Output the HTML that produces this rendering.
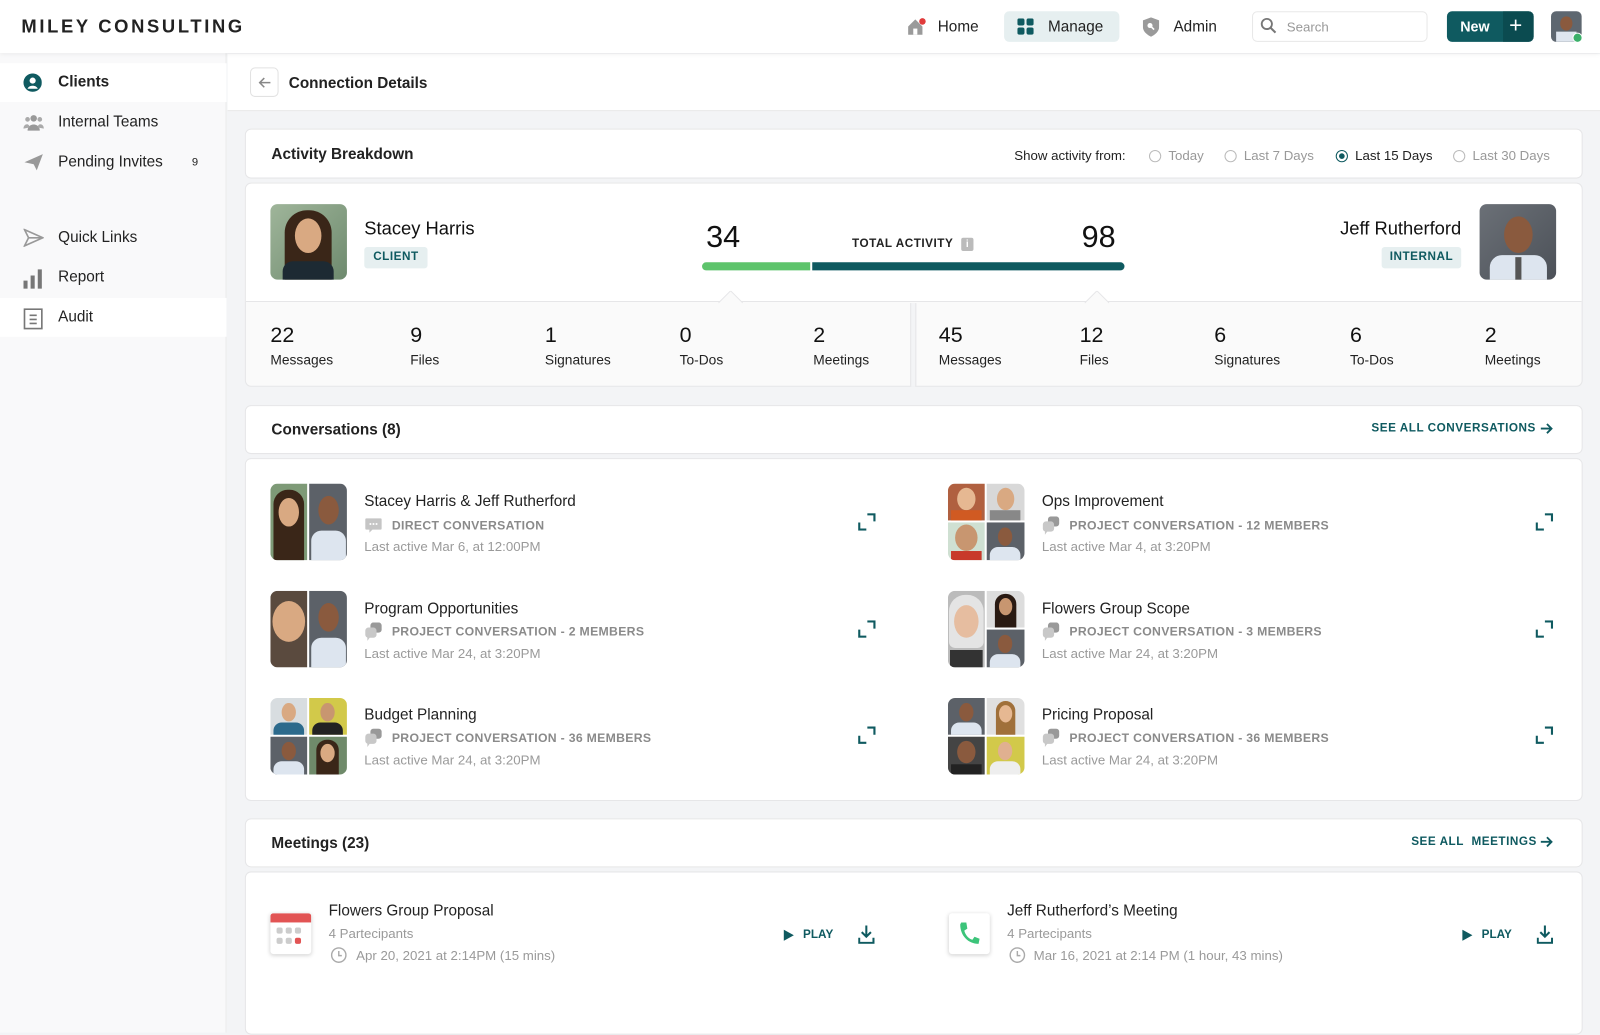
<!DOCTYPE html>
<html><head><meta charset="utf-8">
<style>
*{box-sizing:border-box;margin:0;padding:0}
html,body{width:1600px;height:1000px;overflow:hidden;background:#f3f4f6}
body{font-family:"Liberation Sans",sans-serif;color:#1d1d1f}
#w{position:absolute;left:0;top:0;width:1568px;height:1000px;transform:scale(1.020408);transform-origin:0 0;background:#f3f4f6}
.a{position:absolute}
.hdr{left:0;top:0;width:1568px;height:52px;background:#fff;box-shadow:0 2px 4px rgba(0,0,0,.05);z-index:3}
.logo{left:21px;top:16px;font-size:18px;letter-spacing:2.6px;font-weight:bold;color:#222}
.nav{font-size:15px;color:#222}
.side{left:0;top:52px;width:222px;height:960px;background:#f9f9fa;border-right:1px solid #ececec}
.si{position:absolute;left:0;width:222px;height:38px;font-size:15px;color:#222}
.si span{position:absolute;left:57px;top:10px}
.si svg{position:absolute;left:23px;top:10px}
.card{background:#fff;border:1px solid #e6e6e8;border-radius:6px}
.h15{font-size:15px;font-weight:bold;color:#222}
.ph{border-radius:7px;overflow:hidden}
.face{position:absolute;border-radius:50%}
.num{font-size:21px;color:#111}
.lbl{font-size:13.5px;color:#222}
.ct{font-size:15px;color:#222}
.cs{font-size:12px;font-weight:bold;color:#8a8a8a;letter-spacing:.3px}
.cl{font-size:13px;color:#9a9a9a}
.teal{color:#0f5a60}
</style></head><body><div id="w">

<div class="a hdr">
 <div class="a logo">MILEY CONSULTING</div>
 <svg class="a" style="left:889px;top:17px" width="20" height="18" viewBox="0 0 20 18"><path d="M1 9 L8 2 L15 9 V17 H1Z" fill="#9a9a9a"/><rect x="6" y="11" width="4" height="6" fill="#fff"/><circle cx="15" cy="4" r="3.2" fill="#e03b3b"/></svg>
 <div class="a nav" style="left:919px;top:18px">Home</div>
 <div class="a" style="left:984px;top:11px;width:113px;height:30px;background:#e6eff0;border-radius:5px"></div>
 <svg class="a" style="left:997px;top:18px" width="16" height="16"><rect x="0" y="0" width="7" height="7" rx="2" fill="#0f5a60"/><rect x="9" y="0" width="7" height="7" rx="2" fill="#0f5a60"/><rect x="0" y="9" width="7" height="7" rx="2" fill="#0f5a60"/><rect x="9" y="9" width="7" height="7" rx="2" fill="#0f5a60"/></svg>
 <div class="a nav" style="left:1027px;top:18px">Manage</div>
 <svg class="a" style="left:1120px;top:17px" width="16" height="19" viewBox="0 0 16 19"><path d="M8 0 L16 3 V9 C16 14 12 17 8 19 C4 17 0 14 0 9 V3Z" fill="#9a9a9a"/><circle cx="7" cy="8" r="2.5" fill="#fff"/><path d="M8.5 9.5 L11 12" stroke="#fff" stroke-width="1.6"/></svg>
 <div class="a nav" style="left:1150px;top:18px">Admin</div>
 <div class="a" style="left:1227px;top:11px;width:172px;height:30px;border:1px solid #e8e8e8;border-radius:5px"></div>
 <svg class="a" style="left:1235px;top:17px" width="17" height="17"><circle cx="6.5" cy="6.5" r="5" stroke="#777" stroke-width="1.8" fill="none"/><path d="M10 10 L15 15" stroke="#777" stroke-width="2"/></svg>
 <div class="a" style="left:1261px;top:19px;font-size:13px;color:#999">Search</div>
 <div class="a" style="left:1418px;top:11px;width:85px;height:30px;background:#0f5a60;border-radius:5px;overflow:hidden"><div class="a" style="left:55px;top:0;width:30px;height:30px;background:#0b4b50"></div><div class="a" style="left:13px;top:7px;color:#fff;font-size:14px;font-weight:bold">New</div><div class="a" style="left:61px;top:1px;color:#fff;font-size:22px">+</div></div>
 <div class="a ph" style="left:1520px;top:11px;width:30px;height:30px;background:#5e6770;border-radius:5px"><div class="face" style="left:9px;top:5px;width:12px;height:14px;background:#8a5a3e"></div><div class="a" style="left:5px;top:20px;width:20px;height:10px;background:#dfe6ef"></div></div>
 <div class="a" style="left:1541px;top:32px;width:10px;height:10px;border-radius:50%;background:#3bb06a;border:1.5px solid #fff"></div>
</div>

<div class="a side">
 <div class="si" style="top:10px;background:#fff"><svg width="18" height="18"><circle cx="9" cy="9" r="9" fill="#0f5a60"/><circle cx="9" cy="7" r="3" fill="#fff"/><path d="M4 15 C5 11 13 11 14 15Z" fill="#fff"/></svg><span style="font-weight:bold">Clients</span></div>
 <div class="si" style="top:49px"><svg width="20" height="18"><circle cx="10" cy="5" r="3.2" fill="#999"/><circle cx="4" cy="6" r="2.3" fill="#aaa"/><circle cx="16" cy="6" r="2.3" fill="#aaa"/><path d="M4 17 C4 9 16 9 16 17Z" fill="#999"/><path d="M0 15 C0 10 6 9 6 14Z M20 15 C20 10 14 9 14 14Z" fill="#aaa"/></svg><span>Internal Teams</span></div>
 <div class="si" style="top:88px"><svg width="20" height="18"><path d="M1 9 L19 1 L13 17 L10 11Z" fill="#999"/></svg><span>Pending Invites</span><div class="a" style="left:188px;top:13px;font-size:11px">9</div></div>
 <div class="si" style="top:162px"><svg width="20" height="18"><path d="M1 1 L19 9 L1 17 L5 9Z M5 9 H19" fill="none" stroke="#999" stroke-width="1.6"/></svg><span>Quick Links</span></div>
 <div class="si" style="top:201px"><svg width="20" height="20"><rect x="0" y="12" width="4" height="8" fill="#777"/><rect x="7" y="7" width="4" height="13" fill="#777"/><rect x="14" y="1" width="4" height="19" fill="#777"/></svg><span>Report</span></div>
 <div class="si" style="top:240px;background:#fff"><svg width="20" height="21"><rect x="1" y="1" width="17" height="19" fill="none" stroke="#777" stroke-width="1.6"/><path d="M6 7h7M6 11h7M6 15h7" stroke="#777" stroke-width="1.6"/></svg><span>Audit</span></div>
</div>

<div class="a" style="left:223px;top:53px;width:1345px;height:56px;background:#fff;border-bottom:1px solid #e6e6e6"></div>
<div class="a" style="left:245px;top:66px;width:28px;height:29px;border:1px solid #e2e2e2;border-radius:5px;background:#fff"><svg class="a" style="left:7px;top:8px" width="13" height="12"><path d="M12 6H2M6 1.5L1.5 6L6 10.5" stroke="#888" stroke-width="1.5" fill="none"/></svg></div>
<div class="a" style="left:283px;top:73px;font-size:15px;font-weight:bold;color:#222">Connection Details</div>

<div class="a card" style="left:240px;top:126px;width:1311px;height:49px"></div>
<div class="a h15" style="left:266px;top:143px">Activity Breakdown</div>
<div class="a" style="left:994px;top:145px;font-size:13px;color:#222">Show activity from:</div>
<div class="a" style="left:1126px;top:145px;font-size:13px;color:#999"><span style="display:inline-block;width:12px;height:12px;border:1.5px solid #bbb;border-radius:50%;vertical-align:-2px;margin-right:7px"></span>Today</div>
<div class="a" style="left:1200px;top:145px;font-size:13px;color:#999"><span style="display:inline-block;width:12px;height:12px;border:1.5px solid #bbb;border-radius:50%;vertical-align:-2px;margin-right:7px"></span>Last 7 Days</div>
<div class="a" style="left:1309px;top:145px;font-size:13px;color:#222"><span style="display:inline-block;width:12px;height:12px;border:1.5px solid #0f5a60;border-radius:50%;vertical-align:-2px;margin-right:7px;background:radial-gradient(circle,#0f5a60 2.5px,#fff 3px)"></span>Last 15 Days</div>
<div class="a" style="left:1424px;top:145px;font-size:13px;color:#999"><span style="display:inline-block;width:12px;height:12px;border:1.5px solid #bbb;border-radius:50%;vertical-align:-2px;margin-right:7px"></span>Last 30 Days</div>

<div class="a card" style="left:240px;top:179px;width:1311px;height:200px;background:#fafafa"></div>
<div class="a" style="left:241px;top:180px;width:1309px;height:116px;background:#fff;border-radius:6px 6px 0 0;border-bottom:1px solid #e6e6e8"></div>
<div class="a" style="left:892px;top:297px;width:6px;height:82px;background:#f3f4f6;border-left:1px solid #e6e6e8;border-right:1px solid #e6e6e8"></div>
<svg class="a" style="left:704px;top:285px" width="24" height="13"><path d="M0 12 L12 0 L24 12" fill="#fafafa" stroke="#e6e6e8"/></svg>
<svg class="a" style="left:1063px;top:285px" width="24" height="13"><path d="M0 12 L12 0 L24 12" fill="#fafafa" stroke="#e6e6e8"/></svg>

<div class="a ph" style="left:265px;top:200px;width:75px;height:74px;background:linear-gradient(135deg,#9fb59a,#6e8a6e)"><div class="a" style="left:14px;top:6px;width:46px;height:70px;background:#3a2618;border-radius:22px 22px 0 0"></div><div class="face" style="left:24px;top:14px;width:26px;height:34px;background:#d9a982"></div><div class="a" style="left:12px;top:56px;width:50px;height:20px;background:#1d2a33;border-radius:10px 10px 0 0"></div></div>
<div class="a" style="left:357px;top:214px;font-size:18px;color:#111">Stacey Harris</div>
<div class="a" style="left:357px;top:242px;width:62px;height:21px;background:#e6eff0;border-radius:3px;font-size:11.5px;font-weight:bold;color:#0f5a60;text-align:center;line-height:21px;letter-spacing:.5px">CLIENT</div>
<div class="a" style="left:692px;top:216px;font-size:30px;color:#111">34</div>
<div class="a" style="left:835px;top:233px;font-size:11.5px;font-weight:bold;letter-spacing:.5px;color:#222">TOTAL ACTIVITY</div>
<div class="a" style="left:942px;top:233px;width:12px;height:13px;background:#bbb;border-radius:2px;color:#fff;font-size:10px;text-align:center;line-height:13px;font-weight:bold">i</div>
<div class="a" style="left:1060px;top:216px;font-size:30px;color:#111">98</div>
<div class="a" style="left:688px;top:257px;width:106px;height:8px;background:#5ec46c;border-radius:4px 0 0 4px"></div>
<div class="a" style="left:796px;top:257px;width:306px;height:8px;background:#0f5a60;border-radius:0 4px 4px 0"></div>
<div class="a" style="left:1200px;top:214px;width:232px;text-align:right;font-size:18px;color:#111">Jeff Rutherford</div>
<div class="a" style="left:1354px;top:242px;width:78px;height:21px;background:#e6eff0;border-radius:3px;font-size:11.5px;font-weight:bold;color:#0f5a60;text-align:center;line-height:21px;letter-spacing:.5px">INTERNAL</div>
<div class="a ph" style="left:1450px;top:200px;width:75px;height:74px;background:linear-gradient(135deg,#6b7077,#4c5158)"><div class="face" style="left:24px;top:12px;width:28px;height:36px;background:#8a5a3e"></div><div class="a" style="left:10px;top:50px;width:56px;height:26px;background:#dde5ef;border-radius:12px 12px 0 0"></div><div class="a" style="left:35px;top:52px;width:6px;height:24px;background:#555"></div></div>

<div class="a num" style="left:265px;top:317px">22</div><div class="a lbl" style="left:265px;top:345px">Messages</div>
<div class="a num" style="left:402px;top:317px">9</div><div class="a lbl" style="left:402px;top:345px">Files</div>
<div class="a num" style="left:534px;top:317px">1</div><div class="a lbl" style="left:534px;top:345px">Signatures</div>
<div class="a num" style="left:666px;top:317px">0</div><div class="a lbl" style="left:666px;top:345px">To-Dos</div>
<div class="a num" style="left:797px;top:317px">2</div><div class="a lbl" style="left:797px;top:345px">Meetings</div>
<div class="a num" style="left:920px;top:317px">45</div><div class="a lbl" style="left:920px;top:345px">Messages</div>
<div class="a num" style="left:1058px;top:317px">12</div><div class="a lbl" style="left:1058px;top:345px">Files</div>
<div class="a num" style="left:1190px;top:317px">6</div><div class="a lbl" style="left:1190px;top:345px">Signatures</div>
<div class="a num" style="left:1323px;top:317px">6</div><div class="a lbl" style="left:1323px;top:345px">To-Dos</div>
<div class="a num" style="left:1455px;top:317px">2</div><div class="a lbl" style="left:1455px;top:345px">Meetings</div>

<div class="a card" style="left:240px;top:397px;width:1311px;height:48px"></div>
<div class="a h15" style="left:266px;top:413px">Conversations (8)</div>
<div class="a teal" style="left:1344px;top:414px;font-size:11.5px;font-weight:bold;letter-spacing:.5px">SEE ALL CONVERSATIONS</div>
<svg class="a" style="left:1509px;top:414px" width="13" height="12"><path d="M1 6H11M7 1.5L11.5 6L7 10.5" stroke="#0f5a60" stroke-width="1.8" fill="none"/></svg>
<div class="a card" style="left:240px;top:449px;width:1311px;height:336px"></div>

<div class="a card" style="left:240px;top:802px;width:1311px;height:48px"></div>
<div class="a h15" style="left:266px;top:818px">Meetings (23)</div>
<div class="a teal" style="left:1383px;top:819px;font-size:11.5px;font-weight:bold;letter-spacing:.5px">SEE ALL&nbsp; MEETINGS</div>
<svg class="a" style="left:1509px;top:819px" width="13" height="12"><path d="M1 6H11M7 1.5L11.5 6L7 10.5" stroke="#0f5a60" stroke-width="1.8" fill="none"/></svg>
<div class="a card" style="left:240px;top:854px;width:1311px;height:160px"></div>

<div class="a" style="left:265px;top:895px;width:40px;height:40px;background:#fff;box-shadow:0 1px 4px rgba(0,0,0,.18);border-radius:3px;overflow:hidden"><div style="height:9px;background:#e25454"></div><svg class="a" style="left:6px;top:14px" width="28" height="20"><g fill="#ccc"><rect x="0" y="0" width="6" height="6" rx="2"/><rect x="9" y="0" width="6" height="6" rx="2"/><rect x="18" y="0" width="6" height="6" rx="2"/><rect x="0" y="10" width="6" height="6" rx="2"/><rect x="9" y="10" width="6" height="6" rx="2"/></g><rect x="18" y="10" width="6" height="6" rx="2" fill="#e25454"/></svg></div>
<div class="a ct" style="left:322px;top:884px">Flowers Group Proposal</div>
<div class="a cl" style="left:322px;top:907px">4 Partecipants</div>
<svg class="a" style="left:324px;top:928px" width="16" height="16"><circle cx="8" cy="8" r="7" stroke="#aaa" stroke-width="1.4" fill="none"/><path d="M8 4V8.5H11" stroke="#aaa" stroke-width="1.4" fill="none"/></svg>
<div class="a cl" style="left:349px;top:929px">Apr 20, 2021 at 2:14PM (15 mins)</div>
<svg class="a" style="left:768px;top:911px" width="10" height="11"><path d="M0 0L10 5.5L0 11Z" fill="#0f5a60"/></svg>
<div class="a teal" style="left:787px;top:910px;font-size:11.5px;font-weight:bold">PLAY</div>
<svg class="a" style="left:841px;top:907px" width="16" height="18"><path d="M8 0V11M3.5 6.5L8 11L12.5 6.5M1 12V17H15V12" stroke="#0f5a60" stroke-width="2" fill="none"/></svg>

<div class="a" style="left:930px;top:895px;width:40px;height:40px;background:#fff;box-shadow:0 1px 4px rgba(0,0,0,.18);border-radius:3px"><svg class="a" style="left:9px;top:8px" width="22" height="24" viewBox="0 0 22 24"><path d="M3 1 L8 1 L9 7 L6 9 C7 13 10 17 14 18 L16 15 L21 17 L20 22 C10 22 2 14 2 3Z" fill="#3cc47a"/></svg></div>
<div class="a ct" style="left:987px;top:884px">Jeff Rutherford’s Meeting</div>
<div class="a cl" style="left:987px;top:907px">4 Partecipants</div>
<svg class="a" style="left:989px;top:928px" width="16" height="16"><circle cx="8" cy="8" r="7" stroke="#aaa" stroke-width="1.4" fill="none"/><path d="M8 4V8.5H11" stroke="#aaa" stroke-width="1.4" fill="none"/></svg>
<div class="a cl" style="left:1013px;top:929px">Mar 16, 2021 at 2:14 PM (1 hour, 43 mins)</div>
<svg class="a" style="left:1433px;top:911px" width="10" height="11"><path d="M0 0L10 5.5L0 11Z" fill="#0f5a60"/></svg>
<div class="a teal" style="left:1452px;top:910px;font-size:11.5px;font-weight:bold">PLAY</div>
<svg class="a" style="left:1506px;top:907px" width="16" height="18"><path d="M8 0V11M3.5 6.5L8 11L12.5 6.5M1 12V17H15V12" stroke="#0f5a60" stroke-width="2" fill="none"/></svg>

<div class="a ph" style="left:265px;top:474px;width:75px;height:75px;background:#fff">
 <div class="a" style="left:0;top:0;width:36px;height:75px;background:#7e9a77"><div class="a" style="left:3px;top:6px;width:30px;height:69px;background:#3a2618;border-radius:14px 14px 0 0"></div><div class="face" style="left:8px;top:14px;width:20px;height:28px;background:#d9a982"></div></div>
 <div class="a" style="left:38px;top:0;width:37px;height:75px;background:#5c6168"><div class="face" style="left:9px;top:12px;width:20px;height:28px;background:#8a5a3e"></div><div class="a" style="left:2px;top:46px;width:34px;height:29px;background:#dde5ef;border-radius:10px 10px 0 0"></div></div>
</div>
<div class="a ct" style="left:357px;top:483px">Stacey Harris &amp; Jeff Rutherford</div>
<svg class="a" style="left:357px;top:507px" width="18" height="16"><path d="M2 1H16Q17 1 17 2V11Q17 12 16 12H8L5 15V12H2Q1 12 1 11V2Q1 1 2 1Z" fill="#c5c5c5"/><circle cx="6" cy="6.5" r="1" fill="#fff"/><circle cx="9" cy="6.5" r="1" fill="#fff"/><circle cx="12" cy="6.5" r="1" fill="#fff"/></svg>
<div class="a cs" style="left:384px;top:508px">DIRECT CONVERSATION</div>
<div class="a cl" style="left:357px;top:528px">Last active Mar 6, at 12:00PM</div>

<div class="a ph" style="left:265px;top:579px;width:75px;height:75px;background:#fff">
 <div class="a" style="left:0;top:0;width:36px;height:75px;background:#5a4a3e"><div class="face" style="left:2px;top:10px;width:32px;height:40px;background:#d9a982"></div></div>
 <div class="a" style="left:38px;top:0;width:37px;height:75px;background:#5c6168"><div class="face" style="left:9px;top:12px;width:20px;height:28px;background:#8a5a3e"></div><div class="a" style="left:2px;top:46px;width:34px;height:29px;background:#dde5ef;border-radius:10px 10px 0 0"></div></div>
</div>
<div class="a ct" style="left:357px;top:588px">Program Opportunities</div>
<svg class="a" style="left:357px;top:610px" width="18" height="18"><rect x="6" y="0" width="11" height="10" rx="3" fill="#999"/><rect x="1" y="5" width="11" height="10" rx="3" fill="#c8c8c8"/><path d="M3 14V18L6 14Z" fill="#c8c8c8"/></svg>
<div class="a cs" style="left:384px;top:612px">PROJECT CONVERSATION - 2 MEMBERS</div>
<div class="a cl" style="left:357px;top:633px">Last active Mar 24, at 3:20PM</div>

<div class="a ph" style="left:265px;top:684px;width:75px;height:75px;background:#fff">
 <div class="a" style="left:0;top:0;width:36px;height:36px;background:#d8dde0"><div class="face" style="left:11px;top:5px;width:14px;height:18px;background:#d9a982"></div><div class="a" style="left:3px;top:24px;width:30px;height:12px;background:#2c6a8c;border-radius:8px 8px 0 0"></div></div>
 <div class="a" style="left:38px;top:0;width:37px;height:36px;background:#d2c94a"><div class="face" style="left:11px;top:5px;width:14px;height:18px;background:#c89670"></div><div class="a" style="left:3px;top:24px;width:30px;height:12px;background:#222;border-radius:8px 8px 0 0"></div></div>
 <div class="a" style="left:0;top:38px;width:36px;height:37px;background:#5c6168"><div class="face" style="left:11px;top:5px;width:14px;height:18px;background:#8a5a3e"></div><div class="a" style="left:3px;top:24px;width:30px;height:13px;background:#dde5ef;border-radius:8px 8px 0 0"></div></div>
 <div class="a" style="left:38px;top:38px;width:37px;height:37px;background:#6f8a6a"><div class="a" style="left:7px;top:3px;width:22px;height:34px;background:#3a2618;border-radius:10px 10px 0 0"></div><div class="face" style="left:11px;top:7px;width:14px;height:18px;background:#d9a982"></div></div>
</div>
<div class="a ct" style="left:357px;top:692px">Budget Planning</div>
<svg class="a" style="left:357px;top:714px" width="18" height="18"><rect x="6" y="0" width="11" height="10" rx="3" fill="#999"/><rect x="1" y="5" width="11" height="10" rx="3" fill="#c8c8c8"/><path d="M3 14V18L6 14Z" fill="#c8c8c8"/></svg>
<div class="a cs" style="left:384px;top:716px">PROJECT CONVERSATION - 36 MEMBERS</div>
<div class="a cl" style="left:357px;top:737px">Last active Mar 24, at 3:20PM</div>

<div class="a ph" style="left:929px;top:474px;width:75px;height:75px;background:#fff">
 <div class="a" style="left:0;top:0;width:36px;height:36px;background:#b06040"><div class="face" style="left:9px;top:4px;width:18px;height:22px;background:#e6b892"></div><div class="a" style="left:3px;top:26px;width:30px;height:10px;background:#d05a22"></div></div>
 <div class="a" style="left:38px;top:0;width:37px;height:36px;background:#d8d8d8"><div class="face" style="left:10px;top:4px;width:17px;height:22px;background:#d9a982"></div><div class="a" style="left:3px;top:26px;width:30px;height:10px;background:#888"></div></div>
 <div class="a" style="left:0;top:38px;width:36px;height:37px;background:#cfe0d2"><div class="face" style="left:7px;top:2px;width:22px;height:26px;background:#c89670"></div><div class="a" style="left:3px;top:28px;width:30px;height:9px;background:#c83a2a"></div></div>
 <div class="a" style="left:38px;top:38px;width:37px;height:37px;background:#5c6168"><div class="face" style="left:11px;top:5px;width:14px;height:18px;background:#8a5a3e"></div><div class="a" style="left:3px;top:24px;width:30px;height:13px;background:#dde5ef;border-radius:8px 8px 0 0"></div></div>
</div>
<div class="a ct" style="left:1021px;top:483px">Ops Improvement</div>
<svg class="a" style="left:1021px;top:506px" width="18" height="18"><rect x="6" y="0" width="11" height="10" rx="3" fill="#999"/><rect x="1" y="5" width="11" height="10" rx="3" fill="#c8c8c8"/><path d="M3 14V18L6 14Z" fill="#c8c8c8"/></svg>
<div class="a cs" style="left:1048px;top:508px">PROJECT CONVERSATION - 12 MEMBERS</div>
<div class="a cl" style="left:1021px;top:528px">Last active Mar 4, at 3:20PM</div>

<div class="a ph" style="left:929px;top:579px;width:75px;height:75px;background:#fff">
 <div class="a" style="left:0;top:0;width:36px;height:75px;background:#bbb"><div class="a" style="left:1px;top:4px;width:34px;height:52px;background:#e4e4e4;border-radius:16px 16px 6px 6px"></div><div class="face" style="left:6px;top:14px;width:24px;height:32px;background:#e6bda0"></div><div class="a" style="left:2px;top:58px;width:32px;height:17px;background:#333"></div></div>
 <div class="a" style="left:38px;top:0;width:37px;height:36px;background:#ddd"><div class="a" style="left:8px;top:3px;width:21px;height:33px;background:#2a1a12;border-radius:10px 10px 0 0"></div><div class="face" style="left:12px;top:7px;width:13px;height:17px;background:#c89670"></div></div>
 <div class="a" style="left:38px;top:38px;width:37px;height:37px;background:#5c6168"><div class="face" style="left:11px;top:5px;width:14px;height:18px;background:#8a5a3e"></div><div class="a" style="left:3px;top:24px;width:30px;height:13px;background:#dde5ef;border-radius:8px 8px 0 0"></div></div>
</div>
<div class="a ct" style="left:1021px;top:588px">Flowers Group Scope</div>
<svg class="a" style="left:1021px;top:610px" width="18" height="18"><rect x="6" y="0" width="11" height="10" rx="3" fill="#999"/><rect x="1" y="5" width="11" height="10" rx="3" fill="#c8c8c8"/><path d="M3 14V18L6 14Z" fill="#c8c8c8"/></svg>
<div class="a cs" style="left:1048px;top:612px">PROJECT CONVERSATION - 3 MEMBERS</div>
<div class="a cl" style="left:1021px;top:633px">Last active Mar 24, at 3:20PM</div>

<div class="a ph" style="left:929px;top:684px;width:75px;height:75px;background:#fff">
 <div class="a" style="left:0;top:0;width:36px;height:36px;background:#5c6168"><div class="face" style="left:11px;top:5px;width:14px;height:18px;background:#8a5a3e"></div><div class="a" style="left:3px;top:24px;width:30px;height:12px;background:#dde5ef;border-radius:8px 8px 0 0"></div></div>
 <div class="a" style="left:38px;top:0;width:37px;height:36px;background:#e0e0e0"><div class="a" style="left:9px;top:3px;width:19px;height:33px;background:#a0703a;border-radius:10px 10px 0 0"></div><div class="face" style="left:12px;top:7px;width:13px;height:17px;background:#e6b892"></div></div>
 <div class="a" style="left:0;top:38px;width:36px;height:37px;background:#444"><div class="face" style="left:9px;top:4px;width:18px;height:22px;background:#8a5a3e"></div><div class="a" style="left:3px;top:27px;width:30px;height:10px;background:#222"></div></div>
 <div class="a" style="left:38px;top:38px;width:37px;height:37px;background:#d2c94a"><div class="face" style="left:11px;top:5px;width:14px;height:18px;background:#e0b090"></div><div class="a" style="left:3px;top:24px;width:30px;height:13px;background:#eee;border-radius:8px 8px 0 0"></div></div>
</div>
<div class="a ct" style="left:1021px;top:692px">Pricing Proposal</div>
<svg class="a" style="left:1021px;top:714px" width="18" height="18"><rect x="6" y="0" width="11" height="10" rx="3" fill="#999"/><rect x="1" y="5" width="11" height="10" rx="3" fill="#c8c8c8"/><path d="M3 14V18L6 14Z" fill="#c8c8c8"/></svg>
<div class="a cs" style="left:1048px;top:716px">PROJECT CONVERSATION - 36 MEMBERS</div>
<div class="a cl" style="left:1021px;top:737px">Last active Mar 24, at 3:20PM</div>

<svg class="a" style="left:841px;top:503px" width="17" height="17"><path d="M1 9V16H8M9 1H16V8" stroke="#0f5a60" stroke-width="2.2" fill="none"/></svg>
<svg class="a" style="left:841px;top:608px" width="17" height="17"><path d="M1 9V16H8M9 1H16V8" stroke="#0f5a60" stroke-width="2.2" fill="none"/></svg>
<svg class="a" style="left:841px;top:712px" width="17" height="17"><path d="M1 9V16H8M9 1H16V8" stroke="#0f5a60" stroke-width="2.2" fill="none"/></svg>
<svg class="a" style="left:1505px;top:503px" width="17" height="17"><path d="M1 9V16H8M9 1H16V8" stroke="#0f5a60" stroke-width="2.2" fill="none"/></svg>
<svg class="a" style="left:1505px;top:608px" width="17" height="17"><path d="M1 9V16H8M9 1H16V8" stroke="#0f5a60" stroke-width="2.2" fill="none"/></svg>
<svg class="a" style="left:1505px;top:712px" width="17" height="17"><path d="M1 9V16H8M9 1H16V8" stroke="#0f5a60" stroke-width="2.2" fill="none"/></svg>

</div></body></html>
